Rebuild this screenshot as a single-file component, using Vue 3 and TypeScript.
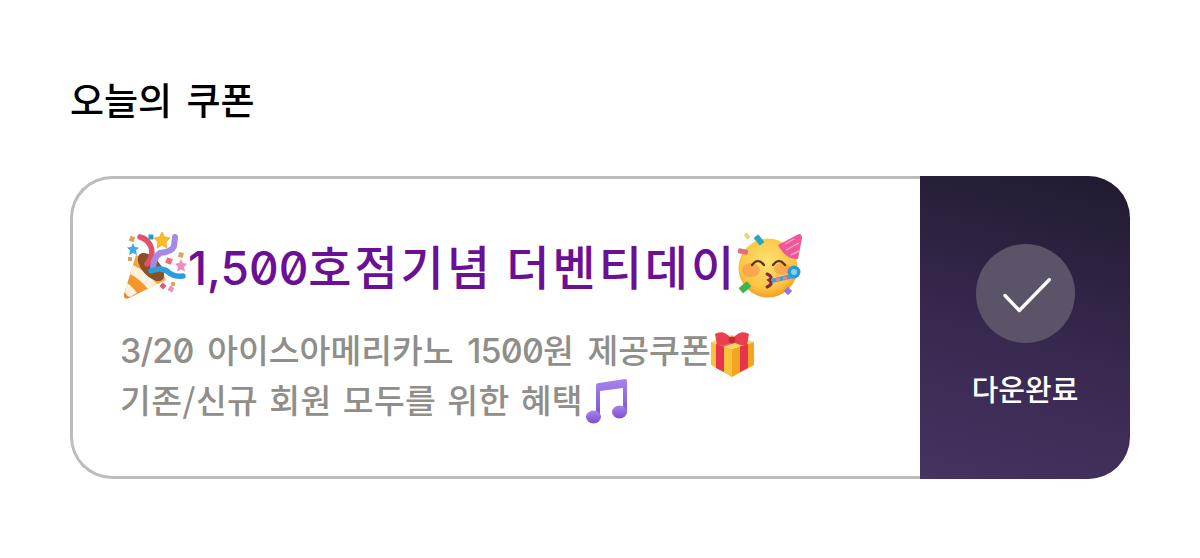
<script setup lang="ts">
const downloadLabel = '다운완료'
</script>

<template>
  <div class="page">
    <h2 class="heading">오늘의 쿠폰</h2>
    <div class="coupon">
      <div class="info">
        <div class="title">
          <svg class="emoji-lg" viewBox="0 0 66 68">
            <defs>
              <linearGradient id="cone" x1="0" y1="1" x2="1" y2="0">
                <stop offset="0" stop-color="#ef8518" />
                <stop offset="1" stop-color="#fbbe62" />
              </linearGradient>
            </defs>
            <path d="M14 23 L2 62 Q1 68 7 66 L44 48 Q38 32 14 23Z" fill="url(#cone)" />
            <path d="M11 33 Q24 39 35 52 L26 57 Q18 47 8 42Z M5 51 Q10 54 15 61 L8 65 Q4 64 3 60Z" fill="#fdf1de" />
            <ellipse cx="29" cy="35" rx="9" ry="17" fill="#8a5028" transform="rotate(-42 29 35)" />
            <path d="M18 5 Q26 7 29 15 Q32 24 25 32" fill="none" stroke="#e2506a" stroke-width="5.500" stroke-linecap="round" />
            <path d="M31 37 Q31 26 38 21 Q50 20 52 14 L53 5" fill="none" stroke="#a48ae2" stroke-width="6" stroke-linecap="round" />
            <path d="M29 39 Q38 35 45 39 Q50 45 61 44" fill="none" stroke="#2a9ddc" stroke-width="5.500" stroke-linecap="round" />
            <path d="M40 0 L42.500 5 L48 6 L44 10 L45 16 L40 13 L35 16 L36 10 L32 6 L37.500 5Z" fill="#f9bd28" stroke="#f4a41d" stroke-width="0.8" />
            <path d="M11 11 L12.800 15 L17 15.500 L14 18.500 L15 23 L11 21 L7 23 L8 18.500 L5 15.500 L9.200 15Z" fill="#3fa9ea" />
            <rect x="26.500" y="2.500" width="5" height="5" fill="#2a9bc4" />
            <rect x="7.500" y="4.500" width="5" height="5" fill="#d9a35c" transform="rotate(20 10 7)" />
            <rect x="6" y="25" width="4" height="4" fill="#d9a35c" />
            <rect x="56.500" y="20.500" width="5" height="5" fill="#dfa75c" transform="rotate(15 59 23)" />
            <rect x="44" y="26" width="6" height="6" fill="#ec6f7c" transform="rotate(20 47 29)" />
            <path d="M59 27 L60.800 31 L65 31.800 L62 35 L63 39.500 L59 37.500 L55 39.500 L56 35 L53 31.800 L57.200 31Z" fill="#f08cc0" />
            <rect x="38.500" y="51.500" width="5" height="5" fill="#dd5a6a" transform="rotate(40 41 54)" />
            <rect x="46.500" y="54.500" width="5" height="5" fill="#ef8fc5" transform="rotate(30 49 57)" />
            <rect x="49" y="50" width="4" height="4" fill="#e0a95c" />
          </svg>
          <span class="title-text"><span class="num">1,500</span>호점기념 더벤티데이</span>
          <svg class="emoji-lg face" viewBox="0 0 66 68">
            <defs>
              <radialGradient id="skin" cx="0.48" cy="0.38" r="0.65">
                <stop offset="0" stop-color="#ffe070" />
                <stop offset="0.72" stop-color="#fcc440" />
                <stop offset="1" stop-color="#f0951f" />
              </radialGradient>
            </defs>
            <circle cx="30" cy="36" r="29.500" fill="url(#skin)" />
            <ellipse cx="13" cy="38" rx="9" ry="7" fill="#f78a4a" opacity="0.55" />
            <ellipse cx="44" cy="37" rx="8" ry="6" fill="#f78a4a" opacity="0.55" />
            <path d="M14 33 Q20 25 26 33 M35 33 Q41 25 47 33" fill="none" stroke="#5b3413" stroke-width="2.200" stroke-linecap="round" />
            <path d="M29 42 Q36 45 31 48 Q36 52 29 55" fill="none" stroke="#8a2840" stroke-width="3" stroke-linecap="round" />
            <path d="M33 47 L53 42 L56 46 L34 51Z" fill="#3ea0d8" />
            <path d="M38 48 L42 47 M45 46.500 L49 45.500" stroke="#f07a9e" stroke-width="3" />
            <circle cx="56" cy="40" r="6.500" fill="#2c9ad6" />
            <circle cx="56" cy="40" r="3" fill="#7fd0f2" />
            <path d="M40 13 L61 2 Q64 2 64 6 L60 27 Q48 28 40 13Z" fill="#f0579a" />
            <path d="M47 12 L56 7 M48 18 L61 11 M53 23 L61 19" stroke="#f8a6c8" stroke-width="1.400" />
            <rect x="18" y="3" width="6" height="10" rx="1" fill="#28a7b8" transform="rotate(-40 21 8)" />
            <rect x="0" y="17" width="10" height="5" rx="1" fill="#e66a82" transform="rotate(10 5 19)" />
            <rect x="7" y="1" width="4" height="6" rx="1" fill="#f6d070" transform="rotate(-35 9 4)" />
            <rect x="2" y="52" width="11" height="7" rx="1" fill="#3fb44c" transform="rotate(-40 7 56)" />
            <rect x="47" y="56" width="6" height="6" fill="#9a78d8" transform="rotate(45 50 59)" />
          </svg>
        </div>
        <p class="desc">
          <span class="num-sm">3/20</span> 아이스아메리카노 <span class="num-sm">1500</span>원 제공쿠폰<svg class="emoji-gift" viewBox="0 0 44 48">
            <path d="M0 13 L21 20 L21 48 L0 36Z" fill="#fbc13a" />
            <path d="M21 20 L43 13 L43 36 L21 48Z" fill="#f2a61f" />
            <path d="M0 13 L21 6 L43 13 L21 20Z" fill="#ffd75e" />
            <path d="M5 15 L13 17.500 L13 43 L5 39Z" fill="#e6344d" />
            <path d="M29 17.500 L37 15 L37 39 L29 43Z" fill="#e6344d" />
            <path d="M5 15 L13 17.500 L29 12 L21 9.500Z" fill="#ef5566" />
            <path d="M4 5 Q12 0 20 9 L20 13 Q10 18 6 16Z" fill="#e8404f" />
            <path d="M38 5 Q30 0 22 9 L22 13 Q32 18 36 16Z" fill="#e8404f" />
            <circle cx="21" cy="11" r="3.400" fill="#c9263c" />
          </svg>
          <br />
          <span class="line2">기존/신규 회원 모두를 위한 혜택</span><svg class="emoji-note" viewBox="0 0 42 46">
            <defs>
              <linearGradient id="note" x1="0" y1="0" x2="0" y2="1">
                <stop offset="0" stop-color="#a884ec" />
                <stop offset="1" stop-color="#7b4fd0" />
              </linearGradient>
            </defs>
            <path d="M10 7 Q10 4 13 4 L39 0 Q41 0 41 2 L41 34 L37 34 L37 9 L14 12 L14 39 L10 39Z" fill="url(#note)" />
            <ellipse cx="7.500" cy="38" rx="7.500" ry="6.500" fill="url(#note)" />
            <ellipse cx="33.500" cy="33" rx="7.500" ry="6.500" fill="url(#note)" />
          </svg>
        </p>
      </div>
      <div class="action">
        <div class="check">
          <svg width="52" height="40" viewBox="0 0 52 40">
            <path d="M6 21.500 L20.300 36.500 L50.300 5.800" fill="none" stroke="#fff" stroke-width="3.400" stroke-linecap="round" stroke-linejoin="round" />
          </svg>
        </div>
        <span class="label">{{ downloadLabel }}</span>
      </div>
    </div>
  </div>
</template>

<style>
html,
body {
  background: #fff;
}
</style>

<style scoped>
.page {
  width: 1200px;
  height: 558px;
  box-sizing: border-box;
  padding: 72px 70px 0;
  font-family: "Noto Sans CJK KR", "Noto Sans", sans-serif;
}

.heading {
  margin: 0 0 50px;
  font-size: 37px;
  line-height: 54px;
  font-weight: 500;
  word-spacing: 6px;
  color: #000;
}

.coupon {
  display: flex;
  height: 303px;
  box-sizing: border-box;
  border: 3px solid #bcbcbc;
  border-right: none;
  border-radius: 42px;
  background: #fff;
}

.info {
  flex: 1;
  padding: 53px 0 0 47px;
}

.title {
  display: flex;
  align-items: center;
  height: 68px;
  margin-left: 2px;
}

.emoji-lg {
  width: 66px;
  height: 68px;
  flex: none;
}

.title-text {
  font-size: 47px;
  line-height: 68px;
  font-weight: 500;
  letter-spacing: 2.900px;
  color: #6b0f96;
  white-space: nowrap;
}

.num {
  font-family: Inter, "Noto Sans CJK KR", sans-serif;
  font-feature-settings: "zero" 1;
  font-size: 46px;
  letter-spacing: 0;
  font-weight: 500;
}

.face {
  margin-left: 1px;
}

.desc {
  margin: 24px 0 0;
  font-size: 33.500px;
  line-height: 50px;
  font-weight: 500;
  word-spacing: 6px;
  color: #8f8e89;
  white-space: nowrap;
}

.num-sm {
  font-family: Inter, "Noto Sans CJK KR", sans-serif;
  font-feature-settings: "zero" 1;
  font-size: 34px;
  line-height: 1;
  letter-spacing: -0.800px;
  font-weight: 450;
}

.line2 {
  word-spacing: 3px;
  letter-spacing: 0.400px;
}

.emoji-gift {
  width: 44px;
  height: 48px;
  margin-block: -8px;
  vertical-align: -6px;
}

.emoji-note {
  width: 42px;
  height: 46px;
  margin-block: -8px;
  margin-left: 3px;
  vertical-align: -3.500px;
}

.action {
  flex: none;
  width: 210px;
  margin: -3px 0;
  display: flex;
  flex-direction: column;
  align-items: center;
  padding-top: 68px;
  box-sizing: border-box;
  height: 303px;
  border-radius: 0 42px 42px 0;
  background: linear-gradient(195deg, #211a30 0%, #3a2a52 60%, #453360 100%);
}

.check {
  width: 99px;
  height: 99px;
  border-radius: 50%;
  background: #5c5368;
  display: flex;
  align-items: center;
  justify-content: center;
}

.label {
  margin-top: 25px;
  font-size: 29px;
  line-height: 40px;
  font-weight: 500;
  color: #fff;
}
</style>
